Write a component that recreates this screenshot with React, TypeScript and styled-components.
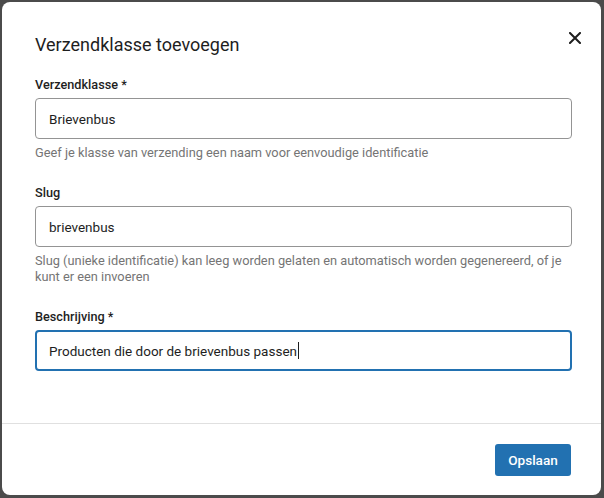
import React from "react";
import styled, { createGlobalStyle } from "styled-components";

const GlobalStyle = createGlobalStyle`
  html, body {
    margin: 0;
    padding: 0;
    background: #4b4b4b;
  }
  body {
    font-family: Roboto, "Noto Sans", "Liberation Sans", sans-serif;
    -webkit-font-smoothing: antialiased;
  }
`;

type FieldProps = {
  label: string;
  value: string;
  help?: string;
  focused?: boolean;
};

const Field = ({ label, value, help, focused }: FieldProps) => (
  <FieldWrap>
    <Label>{label}</Label>
    <InputBox $focused={focused}>
      {value}
      {focused && <Caret />}
    </InputBox>
    {help && <Help>{help}</Help>}
  </FieldWrap>
);

export default function App() {
  return (
    <>
      <GlobalStyle />
      <Overlay>
        <Modal role="dialog" aria-labelledby="modal-title">
          <Header>
            <Title id="modal-title">Verzendklasse toevoegen</Title>
            <CloseButton aria-label="Sluiten">
              <svg width="12" height="12" viewBox="0 0 12 12">
                <path
                  d="M1 1 L11 11 M11 1 L1 11"
                  stroke="#1e1e1e"
                  strokeWidth="2"
                  strokeLinecap="square"
                />
              </svg>
            </CloseButton>
          </Header>

          <Body>
            <Field
              label="Verzendklasse *"
              value="Brievenbus"
              help="Geef je klasse van verzending een naam voor eenvoudige identificatie"
            />
            <Field
              label="Slug"
              value="brievenbus"
              help="Slug (unieke identificatie) kan leeg worden gelaten en automatisch worden gegenereerd, of je kunt er een invoeren"
            />
            <Field
              label="Beschrijving *"
              value="Producten die door de brievenbus passen"
              focused
            />
          </Body>

          <Footer>
            <PrimaryButton>Opslaan</PrimaryButton>
          </Footer>
        </Modal>
      </Overlay>
    </>
  );
}

//#region components

const Overlay = styled.div`
  width: 604px;
  height: 498px;
  padding: 2px 3px 3px 2px;
  box-sizing: border-box;
`;

const Modal = styled.div`
  width: 100%;
  height: 100%;
  background: #fff;
  border-radius: 8px;
  display: flex;
  flex-direction: column;
  overflow: hidden;
`;

const Header = styled.div`
  display: flex;
  align-items: flex-start;
  justify-content: space-between;
  padding: 30px 14px 0 33px;
`;

const Title = styled.h1`
  margin: 0;
  font-size: 18px;
  line-height: 26px;
  font-weight: 400;
  color: #1e1e1e;
`;

const CloseButton = styled.button`
  border: 0;
  background: transparent;
  padding: 0;
  width: 24px;
  height: 24px;
  margin-top: -6px;
  display: flex;
  align-items: center;
  justify-content: center;
  cursor: pointer;
`;

const Body = styled.div`
  flex: 1;
  display: flex;
  flex-direction: column;
  gap: 24px;
  padding: 19px 29px 0 33px;
`;

const FieldWrap = styled.div`
  display: flex;
  flex-direction: column;
`;

const Label = styled.label`
  font-size: 12.7px;
  line-height: 16px;
  font-weight: 500;
  color: #1e1e1e;
  margin-bottom: 5px;
`;

const InputBox = styled.div<{ $focused?: boolean }>`
  height: 41px;
  box-sizing: border-box;
  display: flex;
  align-items: center;
  border-radius: 4px;
  font-size: 13.5px;
  color: #1e1e1e;
  background: #fff;
  border: ${(p) => (p.$focused ? "2px solid #2271b1" : "1px solid #949494")};
  padding: 0 ${(p) => (p.$focused ? "12px" : "13px")};
`;

const Caret = styled.span`
  display: inline-block;
  width: 1px;
  height: 17px;
  background: #1e1e1e;
  margin-left: 1px;
`;

const Help = styled.p`
  margin: 6px 0 0;
  font-size: 12.8px;
  line-height: 16px;
  color: #757575;
`;

const Footer = styled.div`
  border-top: 1px solid #e0e0e0;
  display: flex;
  justify-content: flex-end;
  padding: 20px 30px 19px;
`;

const PrimaryButton = styled.button`
  height: 32px;
  width: 76px;
  padding: 0;
  border: 0;
  border-radius: 3px;
  background: #2271b1;
  color: #fff;
  font-family: inherit;
  font-size: 13.6px;
  font-weight: 500;
  cursor: pointer;
`;

//#endregion
